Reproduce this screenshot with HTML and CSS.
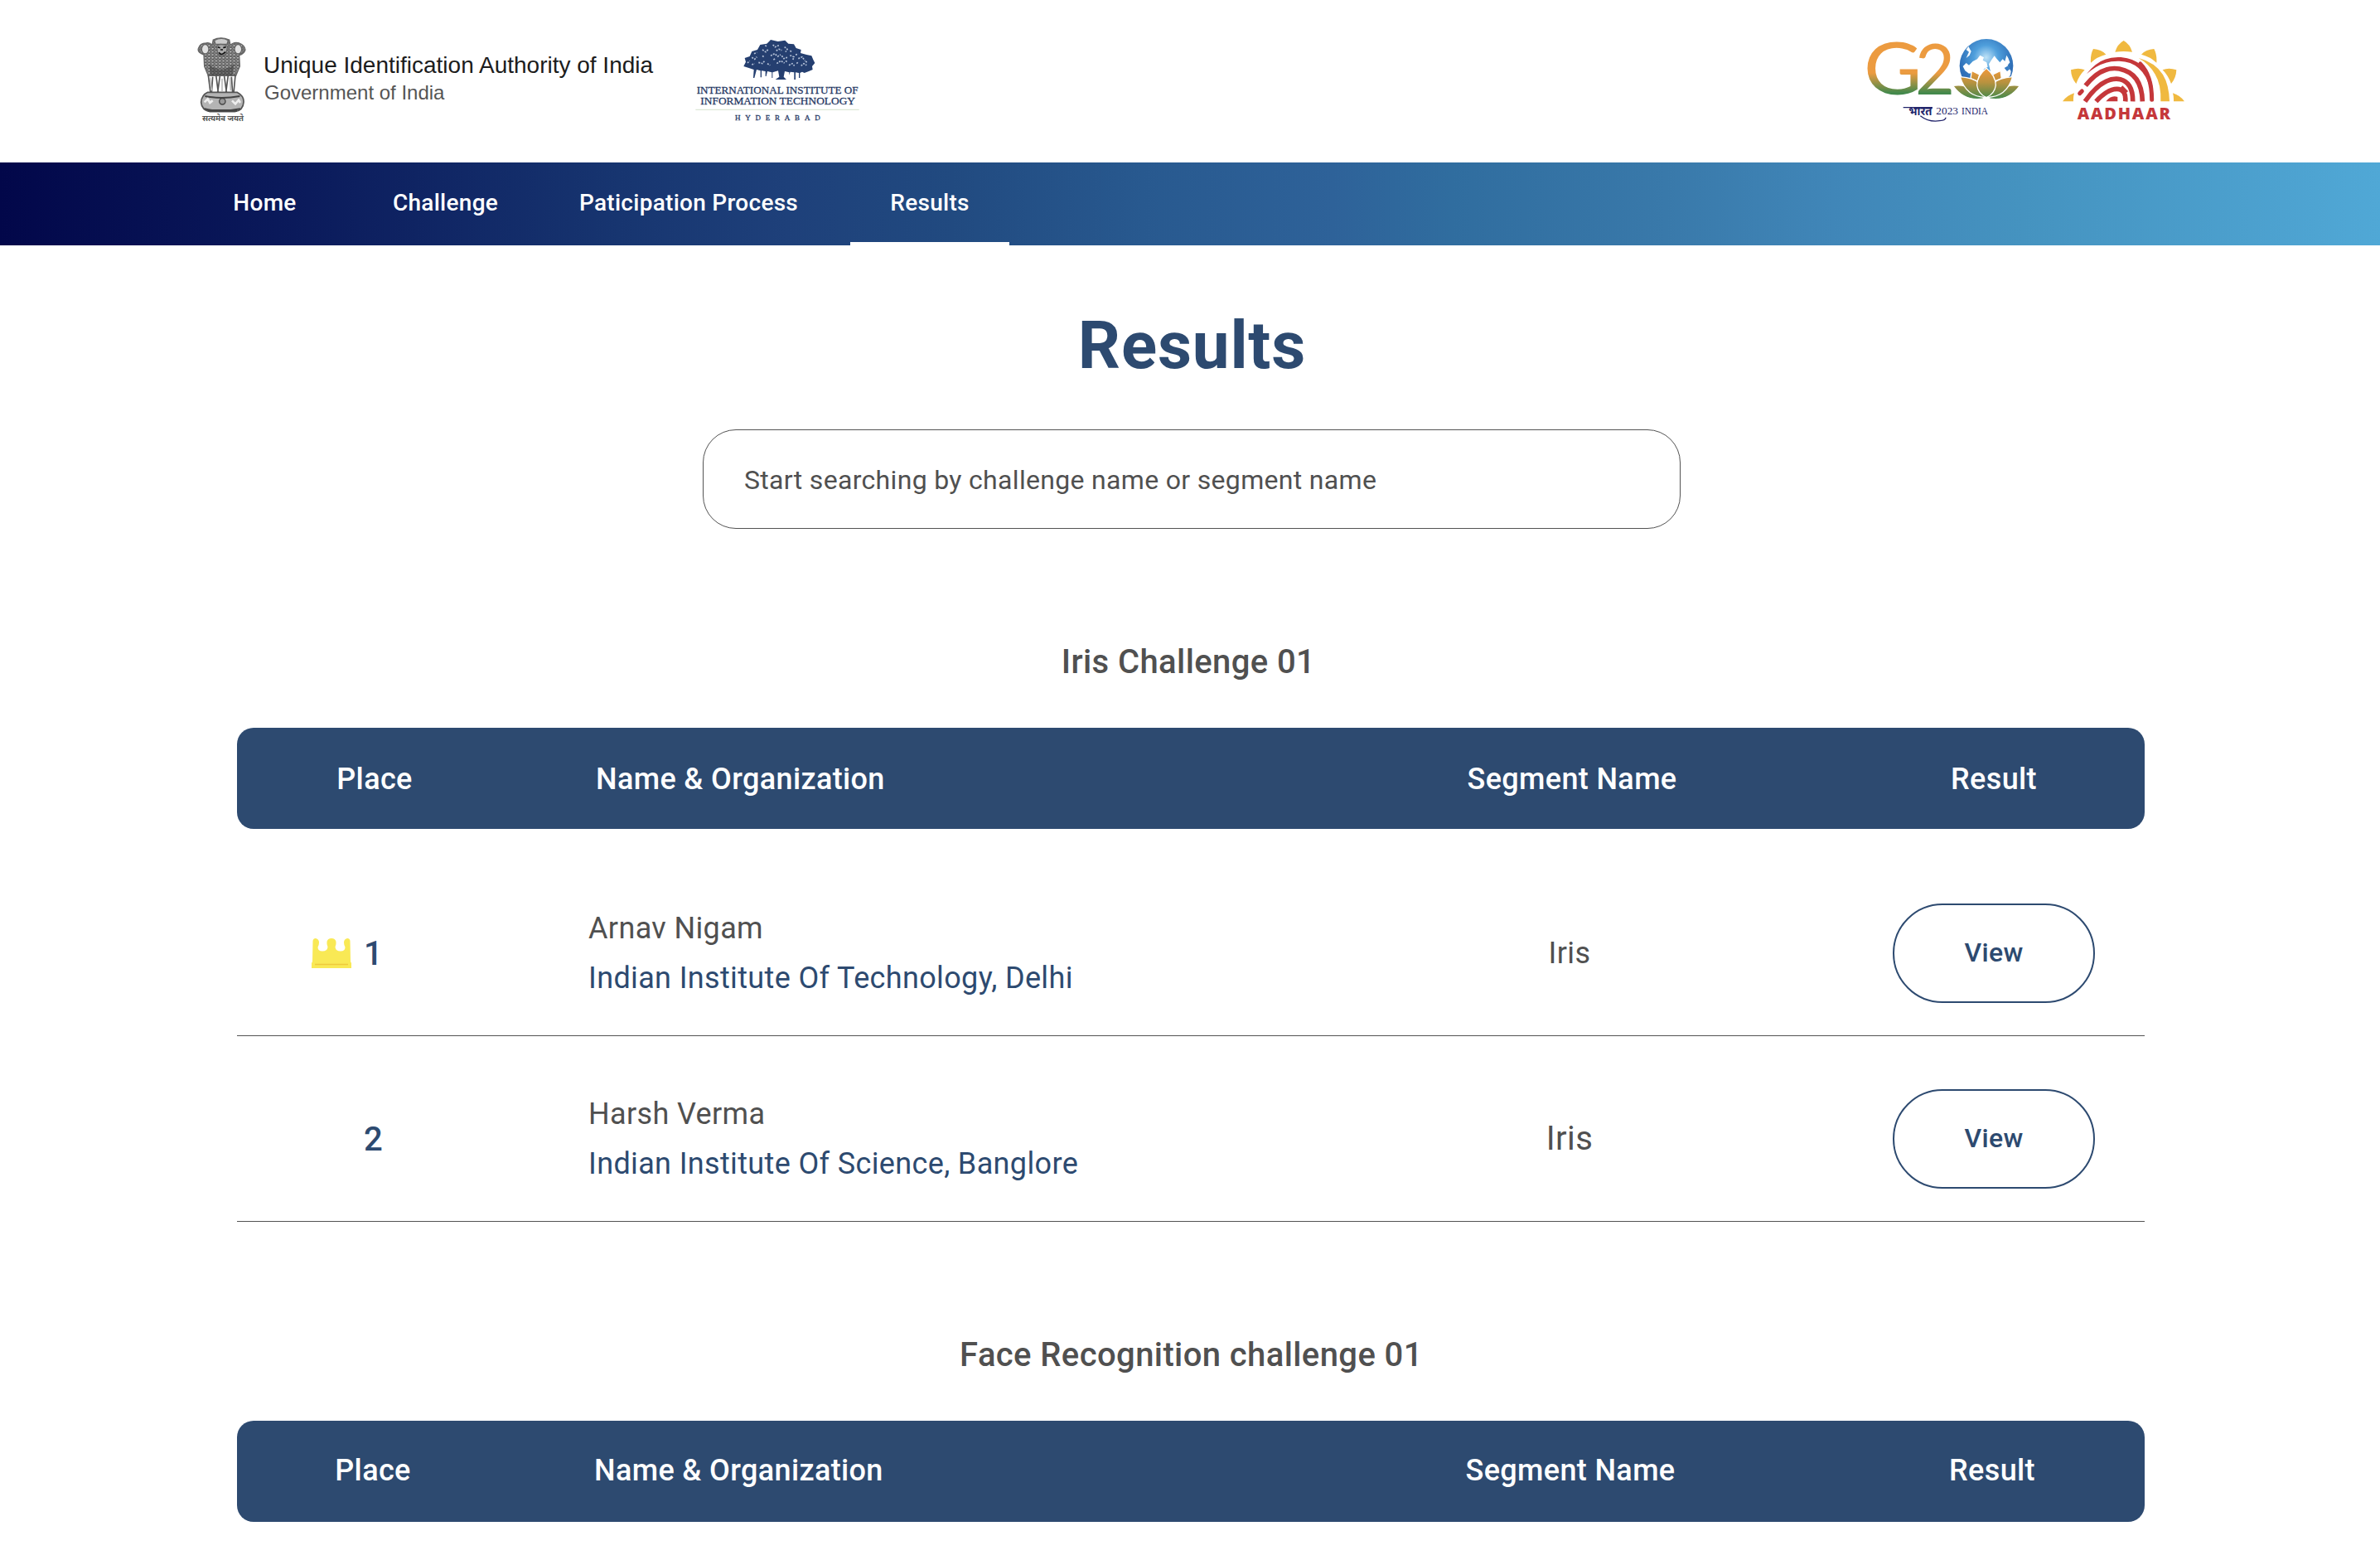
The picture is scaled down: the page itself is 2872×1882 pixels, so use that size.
FILE: index.html
```html
<!DOCTYPE html>
<html lang="en">
<head>
<meta charset="utf-8">
<title>Results</title>
<link rel="stylesheet" href="styles.css">
</head>
<body>
<header class="masthead">
  <svg class="emblem" viewBox="0 -18 300 390" aria-hidden="true">
    <defs>
      <pattern id="fur" width="13" height="11" patternUnits="userSpaceOnUse">
        <rect width="13" height="11" fill="#8a8a8a"/>
        <path d="M0 2l6 6 7-7M3 11l4-4 5 4" stroke="#444" stroke-width="2.5" fill="none"/>
        <circle cx="6" cy="2" r="2.500" fill="#ccc"/>
      </pattern>
    </defs>
    <g stroke="#666" stroke-width="4">
      <path d="M78 90q-24-8-20-22 6-20 28-20 14-4 22 8l4-20q26-12 58 0l4 20q12-14 32-8 20 8 22 24-4 14-22 20l2 40-14 34H94l-14-34z" fill="url(#fur)"/>
      <ellipse cx="83" cy="70" rx="13" ry="17" fill="#e2e2e2"/>
      <ellipse cx="202" cy="70" rx="13" ry="17" fill="#e2e2e2"/>
      <path d="M116 38q26-14 50 0l-4 14h-42z" fill="#ccc"/>
      <path d="M124 58l14-6 14 2 12 6-6 28q-18 12-30-2z" fill="#aaa"/>
    </g>
    <path d="M128 62l9 3M148 65l10-3M132 82q10 14 24-2M138 72h9" stroke="#111" stroke-width="5" fill="none"/>
    <path d="M96 124q46 38 92 0l-6 40h-80z" fill="#333" opacity=".45"/>
    <path d="M94 164l8 64M110 170l-4 58M122 164l8 62M136 168l-8 58M152 168l8 58M166 164l-8 62M178 170l4 58M192 164l-6 64" stroke="#555" stroke-width="5" fill="none"/>
    <path d="M100 172l6 48M173 172l2 48M144 176v46" stroke="#bbb" stroke-width="5"/>
    <path d="M92 226h106q26 14 24 36-2 30-32 34H100q-30-6-32-34 2-26 24-36z" fill="#b4b4b4" stroke="#555" stroke-width="5"/>
    <path d="M82 240q60 12 126 0M80 286q60 14 130 0" stroke="#444" stroke-width="6" fill="none"/>
    <circle cx="145" cy="259" r="11" fill="#999" stroke="#444" stroke-width="4"/>
    <path d="M80 262l12-12 8 14 10-8M180 256l12 12 12-14 6 10" stroke="#eee" stroke-width="8" fill="none"/>
    <path d="M92 292h106" stroke="#444" stroke-width="8"/>
    <text x="72" y="329" textLength="150" lengthAdjust="spacingAndGlyphs" class="motto">सत्यमेव जयते</text>
  </svg>
  <div class="authority">
    <p class="authority-name">Unique Identification Authority of India</p>
    <p class="authority-gov">Government of India</p>
  </div>
  <svg class="iiit" viewBox="0 0 720 390">
    <path class="tree" d="M232 150l8-16-4-14 18-6 8-18 20-6 10-18 24-4 14-14 26 6 26-4 12 12 20 2 8 14 18 6-2 12 22 6 18 4 6 14 6 12-10 12 2 12-14 6-16 6-8-4-8 4v18l-4 0v-18l-12-2v26h-5v-26l-14-2-4 12v-10l-16-4-4 20 10 10h-40l14-10-4-22-20 6v20h-3v-20l-16-4-4 18h-3v-18l-14-2v24h-4v-24l-14-4-8 30h-4l2-30-18-6z"/>
    <path d="M262 118l10 6 8-8M300 90l12 8 10-10M338 72l8 8 14-6M380 80l10 8-6 10M330 112l14-8 12 10 10-6M286 136l14 4 10-12M400 110l14 6-4 12M430 122l14-6 10 14M352 140l14-10 14 8M396 146l12-6 8 8M440 148l10-8 10 6M246 138l8-8M318 140l10 6M370 112l8 10 12-4M270 104l10-4M310 74l8 6M350 94l10-6 10 4M400 94l8 4M420 108l10-2M340 126l8-4M384 130l8 6M262 144l10-4M300 112l8 6M456 132l8 4M424 140l6-6" stroke="#b5c2d8" stroke-width="5" stroke-dasharray="6 4" fill="none"/>
    <path d="M58 307h592" stroke="#bfd3b5" stroke-width="2"/>
    <g class="iiit-text">
      <text x="62" y="248" font-size="38" textLength="585" lengthAdjust="spacingAndGlyphs">INTERNATIONAL INSTITUTE OF</text>
      <text x="76" y="289" font-size="38" textLength="560" lengthAdjust="spacingAndGlyphs">INFORMATION TECHNOLOGY</text>
      <text x="201" y="345" font-size="27" textLength="308">HYDERABAD</text>
    </g>
  </svg>
  <svg class="g20" viewBox="0 0 690 390">
    <defs>
      <linearGradient id="flag" gradientUnits="userSpaceOnUse" x1="0" y1="62" x2="0" y2="256">
        <stop offset=".58" stop-color="#ec9b40"/><stop offset=".95" stop-color="#43894c"/>
      </linearGradient>
      <linearGradient id="petal" gradientUnits="userSpaceOnUse" x1="0" y1="160" x2="0" y2="268">
        <stop offset="0" stop-color="#f0983a"/><stop offset=".45" stop-color="#b8923f"/><stop offset="1" stop-color="#43894c"/>
      </linearGradient>
      <radialGradient id="sea" gradientUnits="userSpaceOnUse" cx="500" cy="118" r="98">
        <stop offset="0" stop-color="#bfe2f7"/><stop offset=".45" stop-color="#4f9fdc"/><stop offset="1" stop-color="#2f6fb7"/>
      </radialGradient>
    </defs>
    <g fill="url(#flag)" class="g20-digits">
      <text x="57" y="252" font-size="260" textLength="211" lengthAdjust="spacingAndGlyphs">G</text>
      <text x="243" y="251" font-size="256" textLength="144" lengthAdjust="spacingAndGlyphs">2</text>
    </g>
    <circle cx="501" cy="148" r="97" fill="url(#sea)"/>
    <path d="M436 78l-8 12 10 8-10 22 12-10 6-14zM416 150l12-12 10 8 14-14 16-8 10-14 14 8-4 10 14 8 4 16-14 8-4 20-14 14-10-6-8-16-18 4-14-10zM510 142l10-16 10-14 8 10 12 14 10-12 8 8 6-22 6 10 6 16-8 10 12 22-2 14-12 12-18 6-14-14-12 4-6-14-8 4z" fill="#fff"/>
    <path d="M566 156l14-8 6 12-10 8z" fill="#3b7fc4"/>
    <g fill="url(#petal)" stroke="#fff" stroke-width="4">
      <path d="M448 166l28 14-6 24-26-10zM552 166l-28 14 6 24 26-10z"/>
      <path d="M380 220q38-6 62 10 30 14 52 36-72 14-114-46zM622 220q-38-6-62 10-30 14-52 36 72 14 114-46z"/>
      <path d="M406 188q50 4 66 22 8 26 26 52-70 0-92-74zM596 188q-50 4-66 22-8 26-26 52 70 0 92-74z"/>
      <path d="M501 157q34 28 34 62-4 30-34 44-30-14-34-44 0-34 34-62z"/>
    </g>
    <g fill="#22246b">
      <text x="220" y="328" font-size="42" textLength="84" lengthAdjust="spacingAndGlyphs" class="bharat">भारत</text>
      <text x="319" y="324" font-size="37" textLength="80" lengthAdjust="spacingAndGlyphs" class="g20-caption">2023</text>
      <text x="411" y="324" font-size="37" textLength="96" lengthAdjust="spacingAndGlyphs" class="g20-caption">INDIA</text>
    </g>
    <path d="M200 299h106M262 329q30 24 70 18 22-2 22-12" stroke="#22246b" stroke-width="4" fill="none"/>
  </svg>
  <svg class="aadhaar" viewBox="0 0 570 390">
    <g fill="#f0b940">
      <path d="M247 98q8-28 31-41 23 13 31 41-31-4-62 0zM159 137q-2-30 9-50 30 2 46 20-32 8-55 30zM397 137q2-30-9-50-30 2-46 20 32 8 55 30zM106 213q-18-20-19-50 28-10 50 0-20 20-31 50zM450 213q18-20 19-50-28-10-50 0 20 20 31 50zM57 277q16-22 42-30-4 14-3 30zM498 277q-16-22-42-30 4 14 3 30z"/>
      <path d="M332 120q60 16 88 60 22 36 24 97h-32q2-62-20-98-22-38-60-59z"/>
    </g>
    <g fill="none" stroke="#c5373a" stroke-width="17">
      <path d="M140 220q56-72 122-61 82 16 84 118"/>
      <path d="M138 277q66-92 128-80 46 12 45 80"/>
      <path d="M178 277q46-50 84-44 26 8 22 44"/>
      <path d="M268 226l20 20"/>
      <path d="M338 141q42 42 42 130" stroke-linecap="round" stroke-width="15"/>
      <path d="M119 248l8-8" stroke-linecap="round" stroke-width="15"/>
    </g>
    <path d="M144 178q50-66 124-61 96 8 116 110l-10 4q-26-98-112-100-64-2-118 47z" fill="#c5373a"/>
    <path d="M214 277q18-24 42-16v16z" fill="#c5373a"/>
    <text x="110" y="341" font-size="60" textLength="337" class="aadhaar-name">AADHAAR</text>
  </svg>
</header>

<nav class="nav">
  <a class="nav-item nav-home">Home</a>
  <a class="nav-item nav-challenge">Challenge</a>
  <a class="nav-item nav-process">Paticipation Process</a>
  <a class="nav-item nav-results">Results</a>
</nav>

<main class="content">
  <h1 class="title">Results</h1>
  <div class="search">Start searching by challenge name or segment name</div>

  <section class="challenge">
    <h2 class="challenge-title iris-title">Iris Challenge 01</h2>
    <div class="grid thead">
      <span class="place-col">Place</span><span class="name-col">Name &amp; Organization</span><span>Segment Name</span><span>Result</span>
    </div>
    <div class="tbody">
      <div class="grid row">
        <div class="place">
          <svg class="crown" viewBox="0 0 48 36" aria-hidden="true">
            <path d="M1 28L1.500 3Q2 0 5 0q4 1 4 5 0 3-1.500 5.500 0 5 5.500 5 6 0 6.500-5Q18 7 18.500 4q1-4 5.500-4t5.500 4q.5 3-1 6.500.5 5 6.500 5 5.500 0 5.500-5Q39 8 39 5q0-4 4-5 3 0 3.500 3L47 28l1 2v6H0v-6z" fill="#f9e955"/>
            <path d="M4 31.500h40" stroke="#efc93c" stroke-width="1.500"/>
          </svg>
          <span>1</span>
        </div>
        <div class="who"><p>Arnav Nigam</p><p class="org">Indian Institute Of Technology, Delhi</p></div>
        <div class="segment">Iris</div>
        <div class="result"><a class="view">View</a></div>
      </div>
      <div class="grid row">
        <div class="place"><span class="crown"></span><span>2</span></div>
        <div class="who"><p>Harsh Verma</p><p class="org">Indian Institute Of Science, Banglore</p></div>
        <div class="segment segment-large">Iris</div>
        <div class="result"><a class="view">View</a></div>
      </div>
    </div>
  </section>

  <section class="challenge">
    <h2 class="challenge-title">Face Recognition challenge 01</h2>
    <div class="grid thead thead-face">
      <span class="place-col">Place</span><span class="name-col">Name &amp; Organization</span><span>Segment Name</span><span>Result</span>
    </div>
  </section>
</main>
</body>
</html>
```
FILE: styles.css
```css
* { box-sizing: border-box; margin: 0; padding: 0; }

body {
  background: #fff;
  color: #505050;
  font-family: Roboto, sans-serif;
  overflow: hidden;
}

/* Logos */
.masthead {
  display: flex;
  align-items: flex-start;
  height: 196px;
  padding: 30px 212px 0 220px;
}
.masthead svg { display: block; height: 130px; flex: none; overflow: visible; }
.emblem { width: 100px; }
.motto { font: 700 30px "Noto Sans", sans-serif; fill: #555; }
.authority {
  width: 500px;
  padding-top: 33px;
  font-family: "Liberation Sans", sans-serif;
}
.authority-name { font-size: 28px; line-height: 32px; color: #1c1c1c; margin-left: -2px; }
.authority-gov { font-size: 24px; line-height: 34px; color: #555; margin-left: -1px; }
.iiit { width: 240px; }
.tree { fill: #253f70; }
.iiit-text { font-family: "Liberation Serif", serif; fill: #1f3763; stroke: #1f3763; stroke-width: .8px; }
.g20 { width: 230px; margin-left: auto; }
.g20-digits { font-family: Lato, sans-serif; font-weight: 400; }
.g20-caption { font-family: "Liberation Serif", serif; }
.bharat { font-family: "Noto Sans", sans-serif; font-weight: 700; }
.aadhaar { width: 190px; margin-left: 10px; }
.aadhaar-name { font-family: "Open Sans", sans-serif; font-weight: 800; fill: #c5373a; }

/* Navigation */
.nav {
  display: flex;
  height: 100px;
  padding-left: 223px;
  background: linear-gradient(90deg, #02074a 0%, #0b1b5c 13%, #173570 26%, #1e407a 33%, #214a80 40%, #28598f 48%, #2e6299 56%, #306d9f 61%, #3979aa 70%, #4086b8 77%, #4593c0 85%, #4da2d0 96%, #50a8d6 100%);
}
.nav-item {
  color: #fff;
  font-size: 28px;
  font-weight: 500;
  letter-spacing: .01em;
  line-height: 97px;
  text-align: center;
}
.nav-home { width: 193px; }
.nav-challenge { width: 243px; }
.nav-process { width: 344px; }
.nav-results { width: 192px; margin-left: 23px; border-bottom: 4px solid #fff; }

/* Page */
.content { width: 2302px; margin-left: 286px; padding-top: 73px; }
.title {
  padding-left: 3px;
  color: #2d4a70;
  font-size: 80px;
  font-weight: 700;
  letter-spacing: .01em;
  line-height: 96px;
  text-align: center;
}
.search {
  width: 1180px;
  height: 120px;
  margin: 53px 0 0 562px;
  padding-left: 49px;
  border: 1px solid #535353;
  border-radius: 40px;
  font-size: 32px;
  letter-spacing: .01em;
  line-height: 120px;
}

/* Challenge tables */
.challenge { margin-top: 136px; }
.challenge-title {
  padding: 1px 0 0 1px;
  margin-bottom: 55px;
  font-size: 40px;
  font-weight: 500;
  letter-spacing: .01em;
  line-height: 48px;
  text-align: center;
}
.iris-title { padding-right: 7px; }
.grid { display: grid; grid-template-columns: 330px 954px 654px 364px; align-items: center; }
.thead {
  height: 122px;
  padding-top: 1px;
  border-radius: 20px;
  background: #2d4a70;
  color: #fff;
  font-size: 36px;
  font-weight: 500;
  letter-spacing: .01em;
  text-align: center;
}
.thead .place-col { padding-left: 2px; }
.thead .name-col { padding-left: 103px; text-align: left; }
.thead-face { padding: 0 0 2px 0; }
.thead-face span { margin-left: -4px; }
.thead-face .name-col { margin-left: -2px; }
.tbody { padding-top: 26px; }
.row { height: 224px; padding-top: 64px; align-items: start; border-bottom: 1px solid #535353; }
.place {
  display: flex;
  align-items: center;
  gap: 15px;
  height: 120px;
  padding-left: 90px;
  color: #2d4a70;
  font-size: 40px;
  font-weight: 500;
}
.crown { display: block; width: 48px; height: 36px; }
.who { padding-left: 94px; font-size: 36px; letter-spacing: .01em; line-height: 60px; }
.org { color: #2d4a70; }
.segment { font-size: 36px; letter-spacing: .01em; line-height: 120px; text-align: center; padding-right: 6px; }
.segment-large { font-size: 40px; }
.result { display: flex; justify-content: center; }
.view {
  width: 244px;
  height: 120px;
  border: 2px solid #2d4a70;
  border-radius: 60px;
  color: #2d4a70;
  font-size: 32px;
  font-weight: 500;
  letter-spacing: .01em;
  line-height: 115px;
  text-align: center;
}
```
